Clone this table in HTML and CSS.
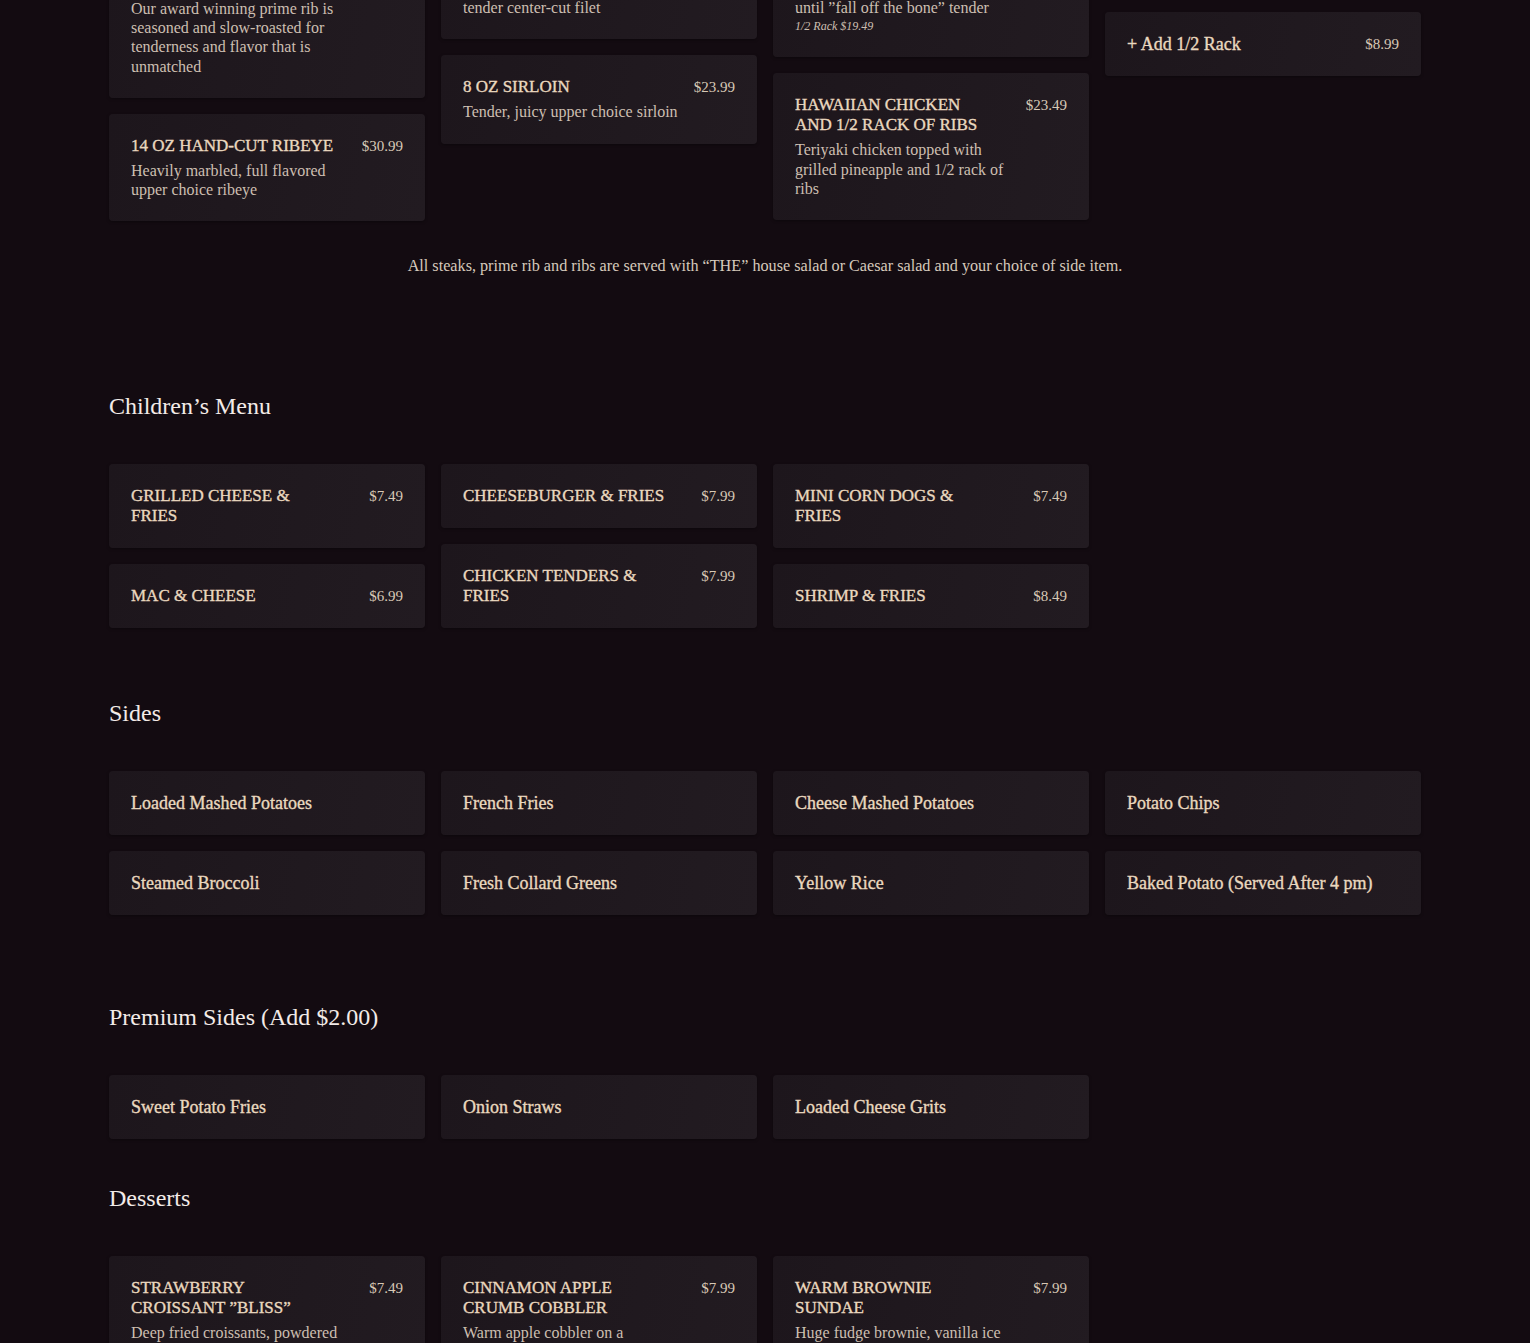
FILE: index.html
```html
<!DOCTYPE html>
<html lang="en">
<head>
<meta charset="utf-8">
<title>Menu</title>
<link rel="stylesheet" href="styles.css">
</head>
<body>
<main class="page">
  <section class="section section--steaks">
    <div class="grid">
      <div class="col">
        <article class="card">
          <div class="card-head"><h3 class="item-title">SLOW-ROASTED PRIME RIB</h3><span class="price">$28.99</span></div>
          <p class="item-desc">Our award winning prime rib is seasoned and slow-roasted for tenderness and flavor that is unmatched</p>
        </article>
        <article class="card">
          <div class="card-head"><h3 class="item-title">14 OZ HAND-CUT RIBEYE</h3><span class="price">$30.99</span></div>
          <p class="item-desc">Heavily marbled, full flavored upper choice ribeye</p>
        </article>
      </div>
      <div class="col">
        <article class="card">
          <div class="card-head"><h3 class="item-title">8 OZ FILET MIGNON</h3><span class="price">$29.99</span></div>
          <p class="item-desc">Hand-trimmed, our most<br>tender center-cut filet</p>
        </article>
        <article class="card">
          <div class="card-head"><h3 class="item-title">8 OZ SIRLOIN</h3><span class="price">$23.99</span></div>
          <p class="item-desc">Tender, juicy upper choice sirloin</p>
        </article>
      </div>
      <div class="col">
        <article class="card">
          <div class="card-head"><h3 class="item-title">FULL RACK OF RIBS</h3><span class="price">$27.99</span></div>
          <p class="item-desc">Slow-cooked baby back ribs<br>until ”fall off the bone” tender</p>
          <p class="item-note">1/2 Rack $19.49</p>
        </article>
        <article class="card">
          <div class="card-head"><h3 class="item-title">HAWAIIAN CHICKEN AND 1/2 RACK OF RIBS</h3><span class="price">$23.49</span></div>
          <p class="item-desc">Teriyaki chicken topped with grilled pineapple and 1/2 rack of ribs</p>
        </article>
      </div>
      <div class="col">
        <article class="card">
          <div class="card-head"><h3 class="item-name">+ Add Grilled Shrimp</h3><span class="price">$6.99</span></div>
        </article>
        <article class="card">
          <div class="card-head"><h3 class="item-name">+ Add 1/2 Rack</h3><span class="price">$8.99</span></div>
        </article>
      </div>
    </div>
    <p class="section-note">All steaks, prime rib and ribs are served with “THE” house salad or Caesar salad and your choice of side item.</p>
  </section>

  <section class="section section--kids">
    <h2 class="section-title">Children’s Menu</h2>
    <div class="grid">
      <div class="col">
        <article class="card"><div class="card-head"><h3 class="item-title">GRILLED CHEESE &amp; FRIES</h3><span class="price">$7.49</span></div></article>
        <article class="card"><div class="card-head"><h3 class="item-title">MAC &amp; CHEESE</h3><span class="price">$6.99</span></div></article>
      </div>
      <div class="col">
        <article class="card"><div class="card-head"><h3 class="item-title">CHEESEBURGER &amp; FRIES</h3><span class="price">$7.99</span></div></article>
        <article class="card"><div class="card-head"><h3 class="item-title">CHICKEN TENDERS &amp; FRIES</h3><span class="price">$7.99</span></div></article>
      </div>
      <div class="col">
        <article class="card"><div class="card-head"><h3 class="item-title">MINI CORN DOGS &amp; FRIES</h3><span class="price">$7.49</span></div></article>
        <article class="card"><div class="card-head"><h3 class="item-title">SHRIMP &amp; FRIES</h3><span class="price">$8.49</span></div></article>
      </div>
      <div class="col"></div>
    </div>
  </section>

  <section class="section section--sides">
    <h2 class="section-title">Sides</h2>
    <div class="grid">
      <div class="col">
        <article class="card"><h3 class="item-name">Loaded Mashed Potatoes</h3></article>
        <article class="card"><h3 class="item-name">Steamed Broccoli</h3></article>
      </div>
      <div class="col">
        <article class="card"><h3 class="item-name">French Fries</h3></article>
        <article class="card"><h3 class="item-name">Fresh Collard Greens</h3></article>
      </div>
      <div class="col">
        <article class="card"><h3 class="item-name">Cheese Mashed Potatoes</h3></article>
        <article class="card"><h3 class="item-name">Yellow Rice</h3></article>
      </div>
      <div class="col">
        <article class="card"><h3 class="item-name">Potato Chips</h3></article>
        <article class="card"><h3 class="item-name">Baked Potato (Served After 4 pm)</h3></article>
      </div>
    </div>
  </section>

  <section class="section section--premium">
    <h2 class="section-title">Premium Sides (Add $2.00)</h2>
    <div class="grid">
      <div class="col">
        <article class="card"><h3 class="item-name">Sweet Potato Fries</h3></article>
      </div>
      <div class="col">
        <article class="card"><h3 class="item-name">Onion Straws</h3></article>
      </div>
      <div class="col">
        <article class="card"><h3 class="item-name">Loaded Cheese Grits</h3></article>
      </div>
      <div class="col"></div>
    </div>
  </section>

  <section class="section section--desserts">
    <h2 class="section-title">Desserts</h2>
    <div class="grid">
      <div class="col">
        <article class="card">
          <div class="card-head"><h3 class="item-title">STRAWBERRY CROISSANT ”BLISS”</h3><span class="price">$7.49</span></div>
          <p class="item-desc">Deep fried croissants, powdered sugar, fresh strawberries and whipped cream</p>
        </article>
      </div>
      <div class="col">
        <article class="card">
          <div class="card-head"><h3 class="item-title">CINNAMON APPLE CRUMB COBBLER</h3><span class="price">$7.99</span></div>
          <p class="item-desc">Warm apple cobbler on a homemade crust with a scoop of vanilla ice cream</p>
        </article>
      </div>
      <div class="col">
        <article class="card">
          <div class="card-head"><h3 class="item-title">WARM BROWNIE SUNDAE</h3><span class="price">$7.99</span></div>
          <p class="item-desc">Huge fudge brownie, vanilla ice cream, hot fudge and whipped cream</p>
        </article>
      </div>
      <div class="col"></div>
    </div>
  </section>
</main>
</body>
</html>
```

FILE: styles.css
```css
html {
  background: #130b11;
}
body {
  margin: 0;
  background: #130b11;
  font-family: "Liberation Serif", "Times New Roman", serif;
  color: #d9cbb8;
}
.page {
  width: 1312px;
  margin: -68px auto 0;
  padding-bottom: 80px;
}
.grid {
  display: grid;
  grid-template-columns: repeat(4, 316px);
  column-gap: 16px;
  align-items: start;
}
.col {
  display: flex;
  flex-direction: column;
  gap: 16px;
}
.card {
  padding: 22px;
  border-radius: 4px;
  background: linear-gradient(100deg, #1d161c 0%, #221b21 100%);
  box-shadow: 0 1px 3px rgba(0, 0, 0, 0.35);
}
.card-head {
  display: flex;
  align-items: flex-start;
  gap: 12px;
}
.card-head > h3 {
  flex: 1;
  min-width: 0;
}
.item-title,
.item-name {
  margin: 0;
  font-size: 17px;
  line-height: 20px;
  font-weight: normal;
  color: #ead8bf;
  -webkit-text-stroke: 0.35px #ead8bf;
}
.item-name {
  font-size: 18px;
}
.item-desc {
  max-width: 226px;
  margin: 5px 0 0;
  font-size: 16px;
  line-height: 19.2px;
  color: #cdbfb1;
}
.item-note {
  margin: 1px 0 0;
  font-size: 12px;
  line-height: 17px;
  font-style: italic;
  color: #cdbfb1;
}
.price {
  flex: 0 0 55px;
  text-align: right;
  font-size: 15px;
  line-height: 20px;
  color: #d8c9b6;
}
.section-title {
  margin: 0 0 42px;
  font-size: 24px;
  line-height: 32px;
  font-weight: normal;
  color: #f3ebe8;
}
.section-note {
  margin: 33px 0 0;
  text-align: center;
  font-size: 16.2px;
  line-height: 24px;
  color: #d6c9bb;
}
.section--kids {
  margin-top: 112px;
}
.section--sides {
  margin-top: 69px;
}
.section--premium {
  margin-top: 86px;
}
.section--desserts {
  margin-top: 43px;
}
```
